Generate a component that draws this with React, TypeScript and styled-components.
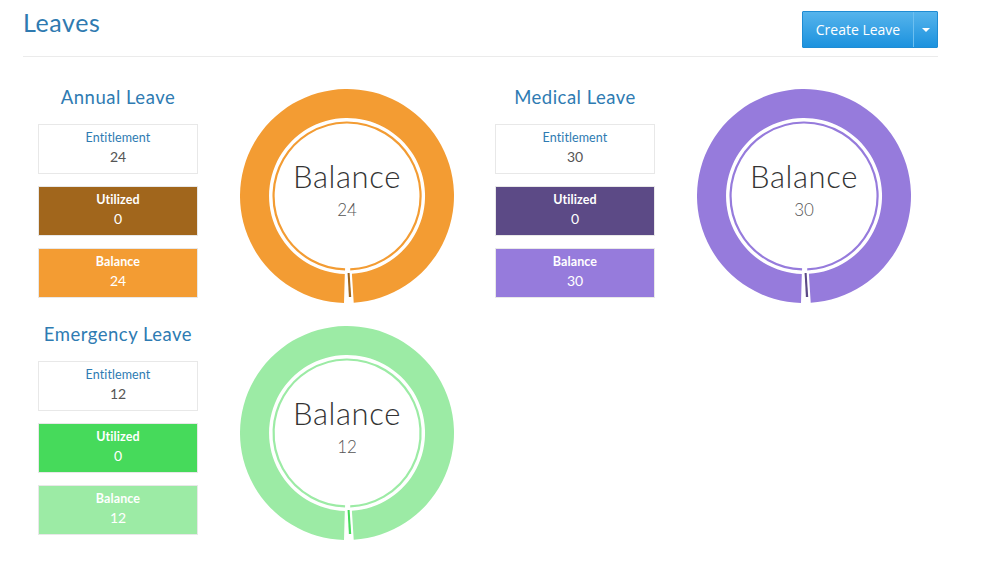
import React from "react";
import styled, { createGlobalStyle } from "styled-components";

const GlobalStyle = createGlobalStyle`
  html, body { margin: 0; padding: 0; background: #ffffff; }
  body { font-family: "Lato", "Open Sans", sans-serif; }
`;

type Leave = {
  name: string;
  entitlement: number;
  utilized: number;
  balance: number;
  main: string;
  dark: string;
};

const leaves: Leave[] = [
  { name: "Annual Leave", entitlement: 24, utilized: 0, balance: 24, main: "#f39c33", dark: "#a1661c" },
  { name: "Medical Leave", entitlement: 30, utilized: 0, balance: 30, main: "#967bdc", dark: "#5c4a86" },
  { name: "Emergency Leave", entitlement: 12, utilized: 0, balance: 12, main: "#9ceba5", dark: "#46da5b" },
];

const Page = styled.div`
  width: 915px;
  padding-left: 23px;
`;

const Header = styled.header`
  display: flex;
  justify-content: space-between;
  align-items: flex-start;
  height: 49px;
  padding-top: 7px;
  border-bottom: 1px solid #ebebeb;
`;

const PageTitle = styled.h1`
  margin: 0;
  font-family: "Lato", sans-serif;
  font-weight: 400;
  font-size: 25px;
  line-height: 30px;
  letter-spacing: 0.6px;
  color: #2f7ab0;
`;

const SplitButton = styled.div`
  display: flex;
  margin-top: 4px;
  height: 37px;
  border: 1px solid #1f8cd3;
  box-sizing: border-box;
  background: linear-gradient(#56b4ec, #1c92de);
  border-radius: 1px;
`;

const MainButton = styled.button`
  width: 110px;
  border: none;
  background: transparent;
  color: #ffffff;
  font-family: "Open Sans", sans-serif;
  font-size: 14px;
  padding: 0;
  cursor: pointer;
`;

const CaretButton = styled.button`
  width: 24px;
  border: none;
  border-left: 1px solid #6cbff0;
  background: transparent;
  display: flex;
  align-items: center;
  justify-content: center;
  padding: 0;
  cursor: pointer;
`;

const Caret = styled.span`
  width: 0;
  height: 0;
  border-left: 4px solid transparent;
  border-right: 4px solid transparent;
  border-top: 4px solid #ffffff;
`;

const Grid = styled.div`
  display: grid;
  grid-template-columns: 457px 457px;
  row-gap: 21px;
  margin-top: 30px;
  padding-left: 15px;
`;

const Card = styled.section`
  display: flex;
  align-items: flex-start;
  gap: 42px;
`;

const Column = styled.div`
  width: 160px;
  display: flex;
  flex-direction: column;
  gap: 12px;
`;

const CardTitle = styled.h2`
  margin: 0 -30px 5px;
  font-family: "Lato", sans-serif;
  font-weight: 400;
  font-size: 18.5px;
  line-height: 20px;
  letter-spacing: 0.5px;
  text-align: center;
  white-space: nowrap;
  color: #2e7bb2;
`;

const StatBox = styled.div<{ $bg: string }>`
  box-sizing: border-box;
  height: 50px;
  border: 1px solid #e8e8e8;
  background: ${(p) => p.$bg};
  padding-top: 5px;
  text-align: center;
  font-family: "Lato", sans-serif;
`;

const StatLabel = styled.div<{ $light?: boolean }>`
  font-size: 12.5px;
  line-height: 16px;
  letter-spacing: 0.1px;
  font-weight: ${(p) => (p.$light ? 700 : 400)};
  color: ${(p) => (p.$light ? "#ffffff" : "#2e7bb2")};
`;

const StatValue = styled.div<{ $light?: boolean }>`
  margin-top: 2px;
  font-size: 14px;
  line-height: 18px;
  color: ${(p) => (p.$light ? "#ffffff" : "#555555")};
`;

const DonutWrap = styled.div`
  position: relative;
  width: 214px;
  height: 214px;
  margin-top: 2px;
  flex: none;
`;

const DonutText = styled.div`
  position: absolute;
  inset: 0;
  display: flex;
  flex-direction: column;
  align-items: center;
  padding-top: 70px;
  font-family: "Lato", sans-serif;
  font-weight: 300;
  pointer-events: none;
`;

const DonutLabel = styled.div`
  font-size: 31px;
  line-height: 34px;
  letter-spacing: 0.6px;
  color: #333333;
`;

const DonutValue = styled.div`
  margin-top: 7px;
  font-size: 17px;
  line-height: 20px;
  color: #555555;
`;

const C = 107;

function pt(r: number, deg: number): string {
  const a = (deg * Math.PI) / 180;
  return `${(C + r * Math.sin(a)).toFixed(2)} ${(C + r * Math.cos(a)).toFixed(2)}`;
}

function ringArc(r0: number, r1: number, a0: number, a1: number): string {
  const large = a1 - a0 > 180 ? 1 : 0;
  return [
    `M ${pt(r1, a0)}`,
    `A ${r1} ${r1} 0 ${large} 0 ${pt(r1, a1)}`,
    `L ${pt(r0, a1)}`,
    `A ${r0} ${r0} 0 ${large} 1 ${pt(r0, a0)}`,
    "Z",
  ].join(" ");
}

function lineArc(r: number, a0: number, a1: number): string {
  const large = a1 - a0 > 180 ? 1 : 0;
  return `M ${pt(r, a0)} A ${r} ${r} 0 ${large} 0 ${pt(r, a1)}`;
}

const Donut: React.FC<{ leave: Leave }> = ({ leave }) => (
  <DonutWrap>
    <svg width="214" height="214" viewBox="0 0 214 214">
      <path d={ringArc(78, 107, 3.6, 358.4)} fill={leave.main} />
      <path d={lineArc(73.5, 2.5, 358.5)} fill="none" stroke={leave.main} strokeWidth="2.2" />
      <polygon points="107.6,184 109.6,184 111.2,208 108.9,208" fill={leave.dark} />
    </svg>
    <DonutText>
      <DonutLabel>Balance</DonutLabel>
      <DonutValue>{leave.balance}</DonutValue>
    </DonutText>
  </DonutWrap>
);

const LeaveCard: React.FC<{ leave: Leave }> = ({ leave }) => (
  <Card>
    <Column>
      <CardTitle>{leave.name}</CardTitle>
      <StatBox $bg="#ffffff">
        <StatLabel>Entitlement</StatLabel>
        <StatValue>{leave.entitlement}</StatValue>
      </StatBox>
      <StatBox $bg={leave.dark}>
        <StatLabel $light>Utilized</StatLabel>
        <StatValue $light>{leave.utilized}</StatValue>
      </StatBox>
      <StatBox $bg={leave.main}>
        <StatLabel $light>Balance</StatLabel>
        <StatValue $light>{leave.balance}</StatValue>
      </StatBox>
    </Column>
    <Donut leave={leave} />
  </Card>
);

export default function App() {
  return (
    <>
      <GlobalStyle />
      <Page>
        <Header>
          <PageTitle>Leaves</PageTitle>
          <SplitButton>
            <MainButton>Create Leave</MainButton>
            <CaretButton>
              <Caret />
            </CaretButton>
          </SplitButton>
        </Header>
        <Grid>
          {leaves.map((l) => (
            <LeaveCard key={l.name} leave={l} />
          ))}
        </Grid>
      </Page>
    </>
  );
}
